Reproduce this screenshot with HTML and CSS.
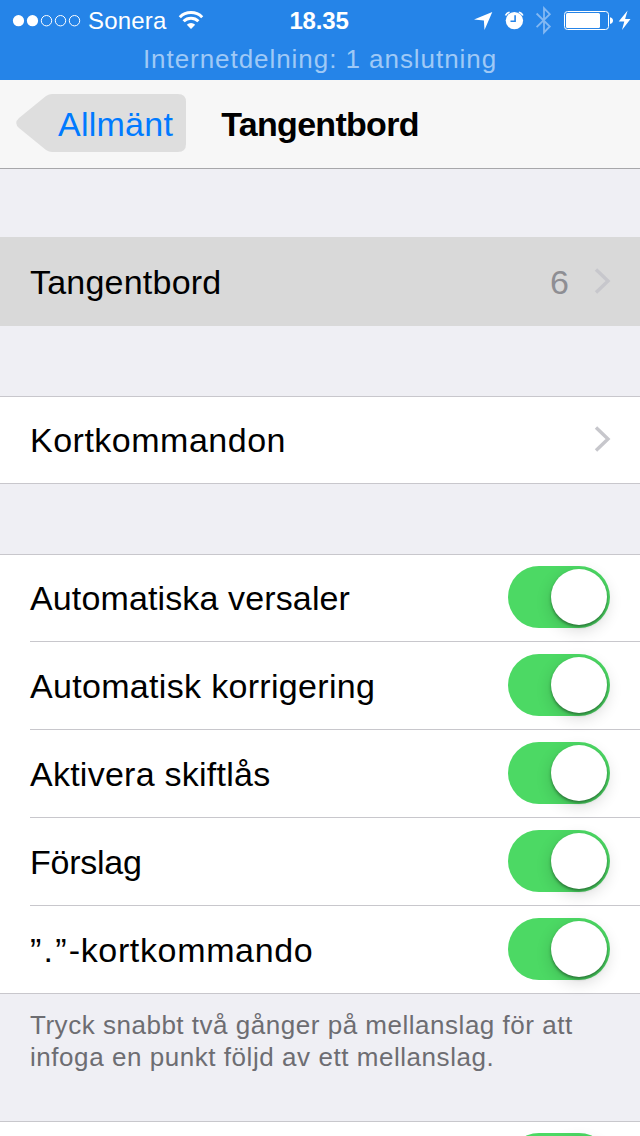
FILE: index.html
```html
<!DOCTYPE html>
<html lang="sv">
<head>
<meta charset="utf-8">
<title>Tangentbord</title>
<link rel="stylesheet" href="styles.css">
</head>
<body>
<div class="screen">
  <header class="status">
    <div class="status-row">
      <div class="status-left">
        <svg class="signal" width="70" height="14" viewBox="0 0 70 14"><g fill="#fff"><circle cx="6.5" cy="6.700" r="5.6"/><circle cx="20.5" cy="6.700" r="5.6"/></g><g fill="none" stroke="#fff" stroke-width="1"><circle cx="34.5" cy="6.700" r="5.2"/><circle cx="48.5" cy="6.700" r="5.2"/><circle cx="62.5" cy="6.700" r="5.2"/></g></svg>
        <span class="carrier">Sonera</span>
        <svg class="wifi" width="26" height="20" viewBox="0 0 26 20"><g fill="none" stroke="#fff" stroke-width="3"><path d="M1.8 7.2a15.8 15.8 0 0 1 22.4 0"/><path d="M5.6 11.2a10.5 10.5 0 0 1 14.8 0"/></g><path fill="#fff" d="M13 19l-4.2-4.3a6 6 0 0 1 8.4 0z"/></svg>
      </div>
      <span class="clock">18.35</span>
      <div class="status-right">
        <svg width="166" height="30" viewBox="474 6 166 30"><path fill="#fff" d="M474 19.600L492.3 12 484.500 30 483.900 20.500z"/><g fill="none" stroke="#fff" stroke-width="1.6"><path d="M505.6 15.6a5 5 0 0 1 4-3.4M518.8 12.2a5 5 0 0 1 4 3.4"/></g><circle cx="514.4" cy="20.6" r="8.7" fill="#fff"/><path d="M515.1 15.2v6.1h-4.6" fill="none" stroke="#2584e8" stroke-width="1.6"/><path d="M536.6 13.5l13.2 13-5.8 6V8.3l5.8 5.9-13.2 13" fill="none" stroke="#83b8f2" stroke-width="1.8"/><rect x="564.5" y="11.5" width="44" height="18" rx="3" fill="none" stroke="#fff"/><rect x="566" y="13" width="34" height="15" rx="1.5" fill="#fff"/><path d="M610 17.3c4 .5 4 6.200 0 6.700z" fill="#fff"/><path d="M627.600 10.500L618.700 21.500h5.600l-2.300 8.500 8.500-11h-5.400z" fill="#fff"/></svg>
      </div>
    </div>
    <div class="sharing">Internetdelning: 1 anslutning</div>
  </header>
  <nav class="nav">
    <a class="back"><svg class="back-shape" width="172" height="58" viewBox="0 0 172 58"><path fill="#dedede" d="M37 0H163q8 0 8 8V50q0 8-8 8H37q-3 0-6-2L4 34q-5.500-5 0-10L31 2q3-2 6-2z"/></svg><span class="back-label">Allmänt</span></a>
    <h1 class="title">Tangentbord</h1>
  </nav>
  <main class="content">
    <section class="group selected">
      <div class="row"><span class="label keyboards">Tangentbord</span><span class="value">6</span><svg class="chevron" width="18" height="28" viewBox="0 0 18 28"><path d="M2 2.500L14 14 2 25.500"/></svg></div>
    </section>
    <section class="group">
      <div class="row"><span class="label shortcuts">Kortkommandon</span><svg class="chevron" width="18" height="28" viewBox="0 0 18 28"><path d="M2 2.500L14 14 2 25.500"/></svg></div>
    </section>
    <section class="group switches">
      <div class="row"><span class="label caps">Automatiska versaler</span><span class="toggle"><i class="knob"></i></span></div>
      <div class="row"><span class="label correct">Automatisk korrigering</span><span class="toggle"><i class="knob"></i></span></div>
      <div class="row"><span class="label lock">Aktivera skiftlås</span><span class="toggle"><i class="knob"></i></span></div>
      <div class="row"><span class="label suggest">Förslag</span><span class="toggle"><i class="knob"></i></span></div>
      <div class="row"><span class="label period"><span class="quoted">”.”</span>-kortkommando</span><span class="toggle"><i class="knob"></i></span></div>
    </section>
    <p class="note"><span class="note-a">Tryck snabbt två gånger på mellanslag för att</span><br><span class="note-b">infoga en punkt följd av ett mellanslag.</span></p>
    <section class="group">
      <div class="row"><span class="label"></span><span class="toggle"><i class="knob"></i></span></div>
    </section>
  </main>
</div>
</body>
</html>
```
FILE: styles.css
```css
* { box-sizing: border-box; }
body { margin: 0; background: #efeff4; font-family: "Liberation Sans", Arial, sans-serif; color: #000; }
.screen { width: 640px; height: 1136px; overflow: hidden; }
svg { display: block; flex: none; }

.status { height: 80px; background: #2584e8; color: #fff; }
.status-row { height: 40px; display: grid; grid-template-columns: 1fr auto 1fr; }
.status-left { display: flex; padding-left: 12px; }
.signal { margin-top: 14px; }
.carrier { flex: none; width: 96px; padding-left: 6px; font-size: 24px; line-height: 42px; letter-spacing: 0.2px; }
.wifi { margin-top: 10px; }
.clock { font-size: 24px; font-weight: bold; line-height: 42px; letter-spacing: -0.2px; margin-left: -1px; margin-right: 1px; }
.status-right { display: flex; justify-content: flex-end; padding-top: 6px; }
.sharing { text-align: center; font-size: 26px; line-height: 38px; letter-spacing: 0.95px; color: #9fc9f6; }

.nav { height: 89px; display: grid; grid-template-columns: 205px 230px 205px; background: #f7f7f7; border-bottom: 1px solid #a7a7aa; }
.back { display: grid; padding: 14px 0 0 15px; color: #007aff; }
.back-shape, .back-label { grid-area: 1 / 1; }
.back-label { padding-left: 43px; font-size: 34px; line-height: 61px; letter-spacing: 0.25px; }
.title { margin: 0; font-size: 34px; line-height: 89px; text-align: center; letter-spacing: -0.7px; }

.content { display: flex; flex-direction: column; padding-top: 68px; }
.group { background: #fff; border-top: 1px solid #c8c7cc; border-bottom: 1px solid #c8c7cc; margin-bottom: 70px; }
.group.selected { background: #d9d9d9; border-color: #d9d9d9; }
.group .row { height: 86px; margin-left: 30px; display: flex; align-items: center; padding: 0 30px 2px 0; }
.selected .row { height: 87px; }
.switches { margin-bottom: 0; }
.switches .row { height: 88px; border-bottom: 1px solid #c8c7cc; }
.switches .row:first-child { height: 87px; }
.switches .row:last-child { height: 87px; border-bottom: 0; }
.label { flex: 1; font-size: 34px; line-height: 40px; padding-top: 2px; letter-spacing: 0.5px; white-space: nowrap; }
.keyboards { letter-spacing: 0.22px; }
.caps { letter-spacing: 0.13px; }
.correct { letter-spacing: 0.32px; }
.lock { letter-spacing: 0.25px; }
.suggest { letter-spacing: -0.25px; }
.period { letter-spacing: 0.65px; }
.quoted { letter-spacing: 2.2px; }
.value { font-size: 34px; line-height: 40px; padding-top: 2px; color: #8e8e93; margin-right: 25px; }
.chevron { fill: none; stroke: #c7c7cc; stroke-width: 3.400; margin-right: -2px; }
.toggle { flex: none; width: 102px; height: 62px; border-radius: 31px; background: #4cd964; padding: 3px 3px 3px 43px; }
.knob { display: block; width: 56px; height: 56px; border-radius: 50%; background: #fff; box-shadow: 0 2px 3px rgba(0,0,0,.38), 0 5px 16px rgba(0,0,0,.16); }
.note { margin: 0; height: 127px; padding: 15px 30px 0; font-size: 26px; line-height: 32px; color: #6d6d72; white-space: nowrap; }
.note-a { letter-spacing: 0.52px; }
.note-b { letter-spacing: 0.55px; }
```
